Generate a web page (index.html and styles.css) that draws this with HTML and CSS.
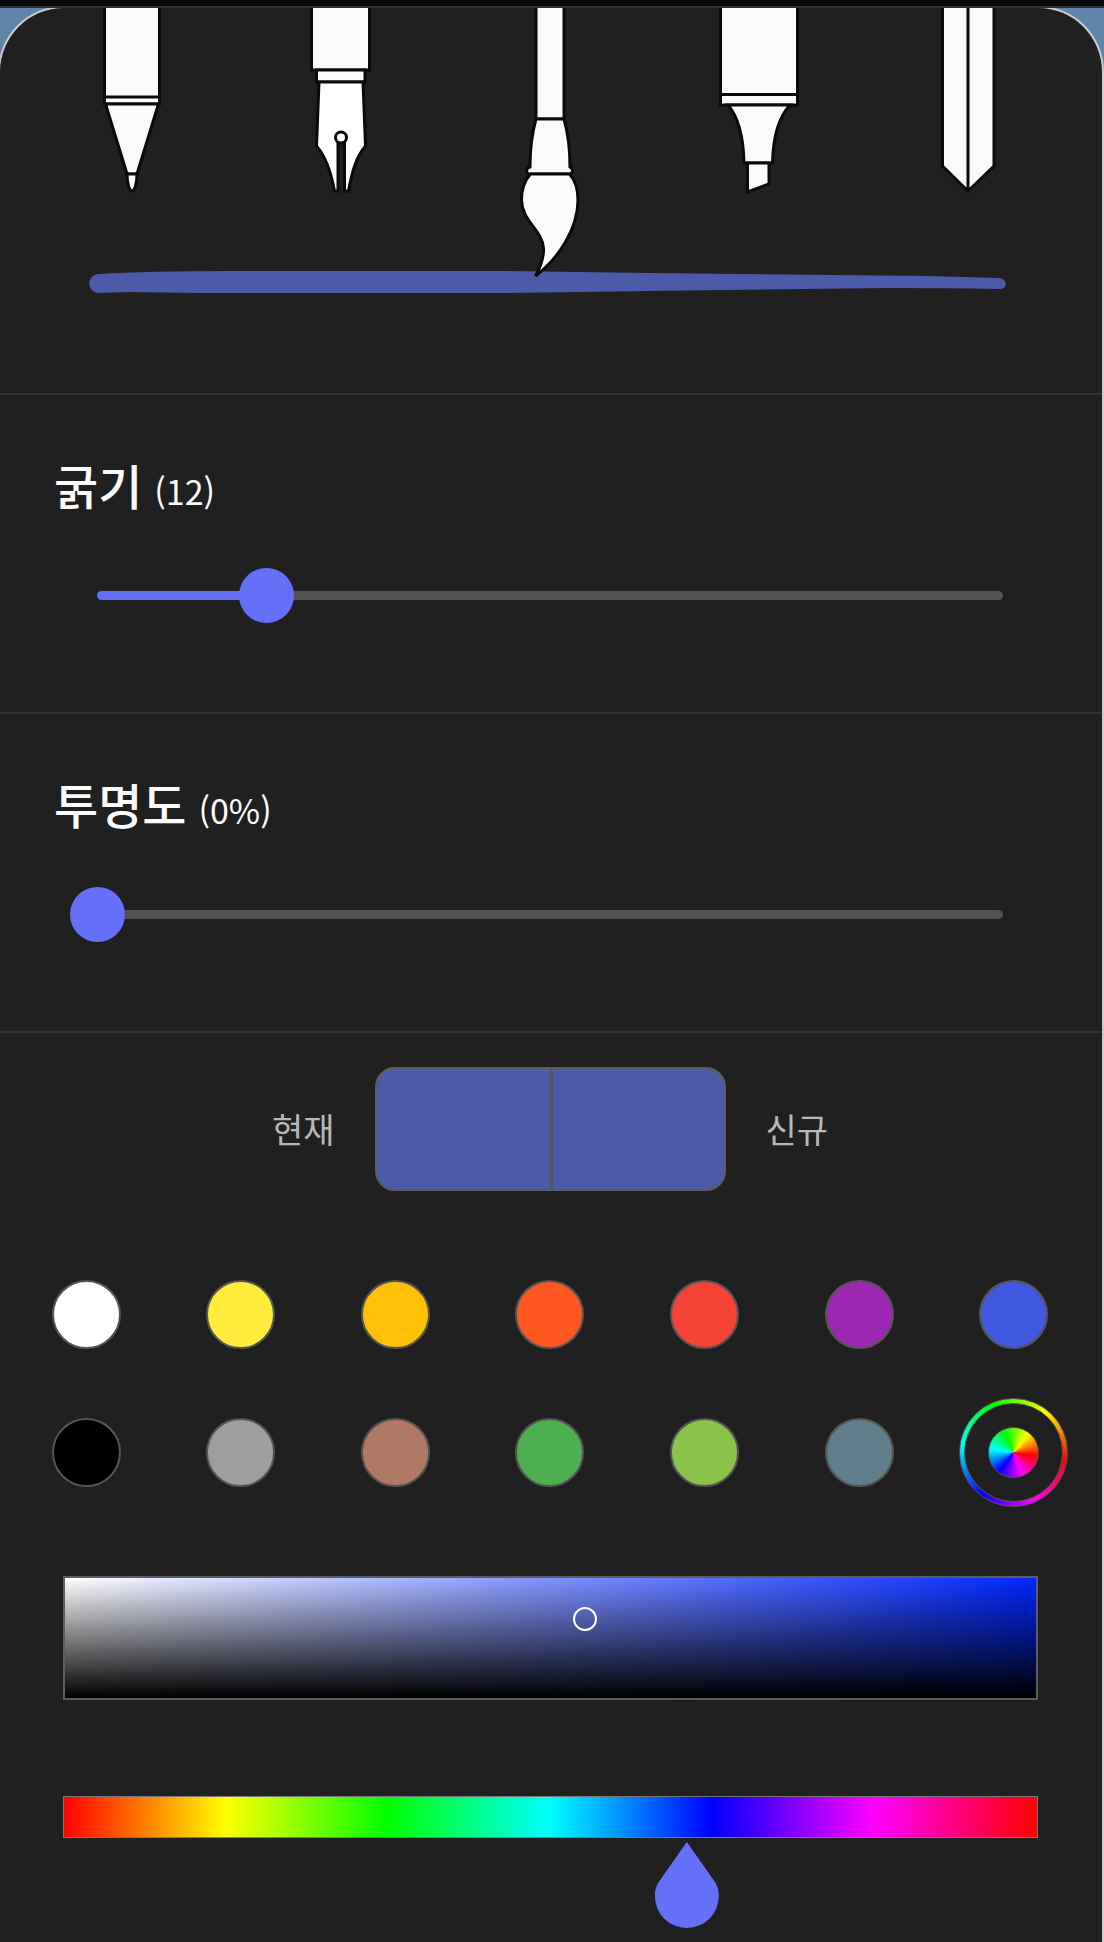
FILE: index.html
```
<!DOCTYPE html>
<html lang="ko">
<head>
<meta charset="utf-8" />
<meta name="viewport" content="width=device-width, initial-scale=1" />
<title>펜 설정</title>
<link rel="stylesheet" href="styles.css">
</head>
<body>
<div class="topbar"></div>
<div class="backdrop">
  <main class="panel">
    <section class="pens">
      <div class="pen-list">
        <button type="button" class="pen" aria-label="볼펜">
          <svg viewBox="0 0 90 270">
            <path d="M17.5 -4H72.5V96H17.5Z M17.5 89H72.5" />
            <path d="M18.5 96H71.5L50 166H40Z" />
            <path d="M40 166H50C50 174 48 183 45 183S40 174 40 166Z" />
          </svg>
        </button>
        <button type="button" class="pen" aria-label="만년필">
          <svg viewBox="0 0 90 270">
            <path d="M15.5 -4H73.5V62H15.5Z" />
            <path d="M20.5 62H69V74H20.5Z" />
            <path class="nib" d="M23 74H67L69.5 138C60 149 56 164 52.500 183H48.500V135H42V183H38.500C35 164 30 149 20.500 138Z" />
            <circle class="nib" cx="45" cy="129.500" r="5.500" />
          </svg>
        </button>
        <button type="button" class="pen" aria-label="붓" aria-pressed="true">
          <svg viewBox="0 0 90 270">
            <path d="M31 -4H59V111H31Z" />
            <path d="M31 111H59C63 125 65 142 65 159C68 160 68 164 66 166H23C21 164 21 160 25 159C25 142 27 125 31 111Z" />
            <path d="M25.500 166H64.500C71 173 73 182 73 192C73 221 53 251 30.500 268C36 258 39 250 38.500 240C37 222 17 213 16.500 192C16.500 181 19 173 25.500 166Z" />
          </svg>
        </button>
        <button type="button" class="pen" aria-label="형광펜">
          <svg viewBox="0 0 90 270">
            <path d="M6.500 -4H83.500V97H6.500Z M6.500 86.500H83.500" />
            <path d="M14 97H76C64 110 59 132 58.500 155H30C29.500 132 25 110 14 97Z" />
            <path d="M33.500 155H55V176L33.500 184Z" />
          </svg>
        </button>
        <button type="button" class="pen" aria-label="커터">
          <svg viewBox="0 0 90 270">
            <path d="M19.500 -4H71V158L45 183L19.500 158Z M45 0V183" />
          </svg>
        </button>
      </div>
      <svg class="stroke-preview" viewBox="0 0 918 24" preserveAspectRatio="none">
        <path d="M10 4Q60 1 140 1H420L560 3L840 6L911 8C920 9 920 19 911 19Q860 18 800 18L560 21L420 23H110L40 22L10 23C-3 22 -3 5 10 4Z" />
      </svg>
    </section>

    <section class="setting">
      <h2><label for="thickness">굵기</label> <output for="thickness">(12)</output></h2>
      <div class="slider" style="--fill: 19%">
        <input type="range" id="thickness" min="1" max="60" value="12" />
      </div>
    </section>

    <section class="setting">
      <h2><label for="opacity">투명도</label> <output for="opacity">(0%)</output></h2>
      <div class="slider" style="--fill: 0%">
        <input type="range" id="opacity" min="0" max="100" value="0" />
      </div>
    </section>

    <section class="colors">
      <div class="compare">
        <span>현재</span>
        <div class="compare-box">
          <div></div>
          <div></div>
        </div>
        <span>신규</span>
      </div>

      <div class="palette">
        <button type="button" class="swatch white" aria-label="흰색"></button>
        <button type="button" class="swatch yellow" aria-label="노랑"></button>
        <button type="button" class="swatch amber" aria-label="호박색"></button>
        <button type="button" class="swatch orange" aria-label="주황"></button>
        <button type="button" class="swatch red" aria-label="빨강"></button>
        <button type="button" class="swatch purple" aria-label="보라"></button>
        <button type="button" class="swatch blue" aria-label="파랑"></button>
        <button type="button" class="swatch black" aria-label="검정"></button>
        <button type="button" class="swatch gray" aria-label="회색"></button>
        <button type="button" class="swatch brown" aria-label="갈색"></button>
        <button type="button" class="swatch green" aria-label="초록"></button>
        <button type="button" class="swatch lime" aria-label="연두"></button>
        <button type="button" class="swatch slate" aria-label="청회색"></button>
        <button type="button" class="custom" aria-label="사용자 지정 색" aria-pressed="true">
          <span class="custom-gap"><span class="custom-wheel"></span></span>
        </button>
      </div>

      <div class="shade">
        <span class="shade-cursor" style="left: 53.6%; top: 34%"></span>
      </div>

      <input type="range" class="hue" aria-label="색조" min="0" max="360" value="234" />
    </section>
  </main>
</div>
</body>
</html>
```
FILE: styles.css
```
:root {
  --bg: #202020;
  --line: #333;
  --edge: #5c5c5c;
  --accent: #656ff8;
  --current: #4d5aa7;
}

* {
  box-sizing: border-box;
}

body {
  margin: 0;
  background: var(--bg);
  color: #fafafa;
  font-family: "Noto Sans CJK KR", "Noto Sans", sans-serif;
}

button {
  padding: 0;
  border: none;
  background: none;
  cursor: pointer;
}

.topbar {
  height: 8px;
  background: #070707;
  border-bottom: 2px solid var(--line);
}

.backdrop {
  overflow: hidden;
  background: #6184ab;
}

.panel {
  min-height: calc(100vh - 8px);
  margin-right: 2px;
  border-radius: 64px 64px 0 0;
  background: var(--bg);
  box-shadow: 0 0 0 2px #ccc;
}

/* pens */
.pens {
  height: 387px;
  border-bottom: 2px solid var(--line);
}

.pen-list {
  position: relative;
  z-index: 1;
  display: grid;
  grid-template-columns: repeat(5, 1fr);
  padding: 0 30px 0 28px;
}

.pen {
  display: flex;
  justify-content: center;
}

.pen svg {
  width: 90px;
  height: 270px;
  fill: #fafafa;
  stroke: #0a0a0a;
  stroke-width: 3;
}

.pen .nib {
  fill: #fff;
}

.stroke-preview {
  display: block;
  width: calc(100% - 185px);
  height: 24px;
  margin: -8px 96px 0 89px;
  fill: var(--current);
}

/* sliders */
.setting {
  height: 319px;
  padding: 53px 72px 0 54px;
  border-bottom: 2px solid var(--line);
}

.setting h2 {
  display: flex;
  align-items: baseline;
  gap: 12px;
  margin: 0;
  font-size: 48px;
  font-weight: 500;
  line-height: 72px;
}

.setting output {
  font-size: 34px;
  font-weight: 400;
}

.slider {
  display: grid;
  align-items: center;
  margin: 40px 0 0 16px;
}

.slider::before,
.slider input {
  grid-area: 1 / 1;
}

.slider::before {
  content: "";
  height: 9px;
  margin: 0 27px;
  border-radius: 5px;
  background: linear-gradient(to right, var(--accent) var(--fill), #525252 var(--fill));
}

input[type="range"] {
  -webkit-appearance: none;
  appearance: none;
  display: block;
  width: 100%;
  margin: 0;
  background: none;
}

.slider input {
  height: 56px;
}

.slider input::-webkit-slider-thumb {
  -webkit-appearance: none;
  width: 55px;
  height: 55px;
  border-radius: 50%;
  background: var(--accent);
}

/* colors */
.colors {
  padding: 34px 0 14px;
}

.compare {
  display: flex;
  justify-content: center;
  align-items: center;
  gap: 40px;
  padding-right: 2px;
  color: #b8b8b8;
  font-size: 34px;
  line-height: 48px;
}

.compare-box {
  display: grid;
  grid-template-columns: 1fr 1fr;
  width: 351px;
  height: 124px;
  border: 2px solid var(--edge);
  border-radius: 20px;
  background: var(--current);
}

.compare-box div + div {
  border-left: 3px solid #555;
}

.palette {
  display: grid;
  grid-template-columns: repeat(7, 1fr);
  grid-auto-rows: 138px;
  place-items: center;
  margin-top: 54px;
  padding: 0 11px 0 9px;
}

.swatch {
  width: 69px;
  height: 69px;
  border: 2px solid #555;
  border-radius: 50%;
}

.white { background: #fff; }
.yellow { background: #ffeb3b; }
.amber { background: #ffc107; }
.orange { background: #ff5722; }
.red { background: #f44336; }
.purple { background: #9c27b0; }
.blue { background: #4158e0; }
.black { background: #000; }
.gray { background: #9e9e9e; }
.brown { background: #b07966; }
.green { background: #4caf50; }
.lime { background: #8bc34a; }
.slate { background: #607d8b; }

.custom,
.custom-wheel {
  border: 1px solid #555;
  border-radius: 50%;
  background: conic-gradient(from 98deg, red, magenta, blue, cyan, lime, yellow, red) border-box;
}

.custom {
  display: grid;
  width: 109px;
  height: 109px;
  padding: 4px;
}

.custom-gap {
  display: grid;
  place-items: center;
  border: 1px solid #555;
  border-radius: 50%;
  background: var(--bg);
}

.custom-wheel {
  width: 51px;
  height: 51px;
}

.shade {
  position: relative;
  height: 124px;
  margin: 55px 64px 0 63px;
  border: 2px solid var(--edge);
  background:
    linear-gradient(to bottom, transparent, #000),
    linear-gradient(to right, #fff, #0026ff);
}

.shade-cursor {
  position: absolute;
  width: 24px;
  height: 24px;
  margin: -12px;
  border: 2px solid #fff;
  border-radius: 50%;
}

.hue {
  height: 42px;
}

input.hue {
  width: calc(100% - 127px);
  margin: 96px 64px 90px 63px;
}

.hue::-webkit-slider-runnable-track {
  height: 42px;
  border: 1px solid #777;
  background: linear-gradient(to right, red, yellow, lime, cyan, blue, magenta, red);
}

.hue::-webkit-slider-thumb {
  -webkit-appearance: none;
  width: 64px;
  height: 86px;
  margin-top: 45px;
  background: var(--accent);
  clip-path: path("M32 0L58 37C62 42 64 47 64 54A32 32 0 0 1 0 54C0 47 2 42 6 37Z");
}
```
